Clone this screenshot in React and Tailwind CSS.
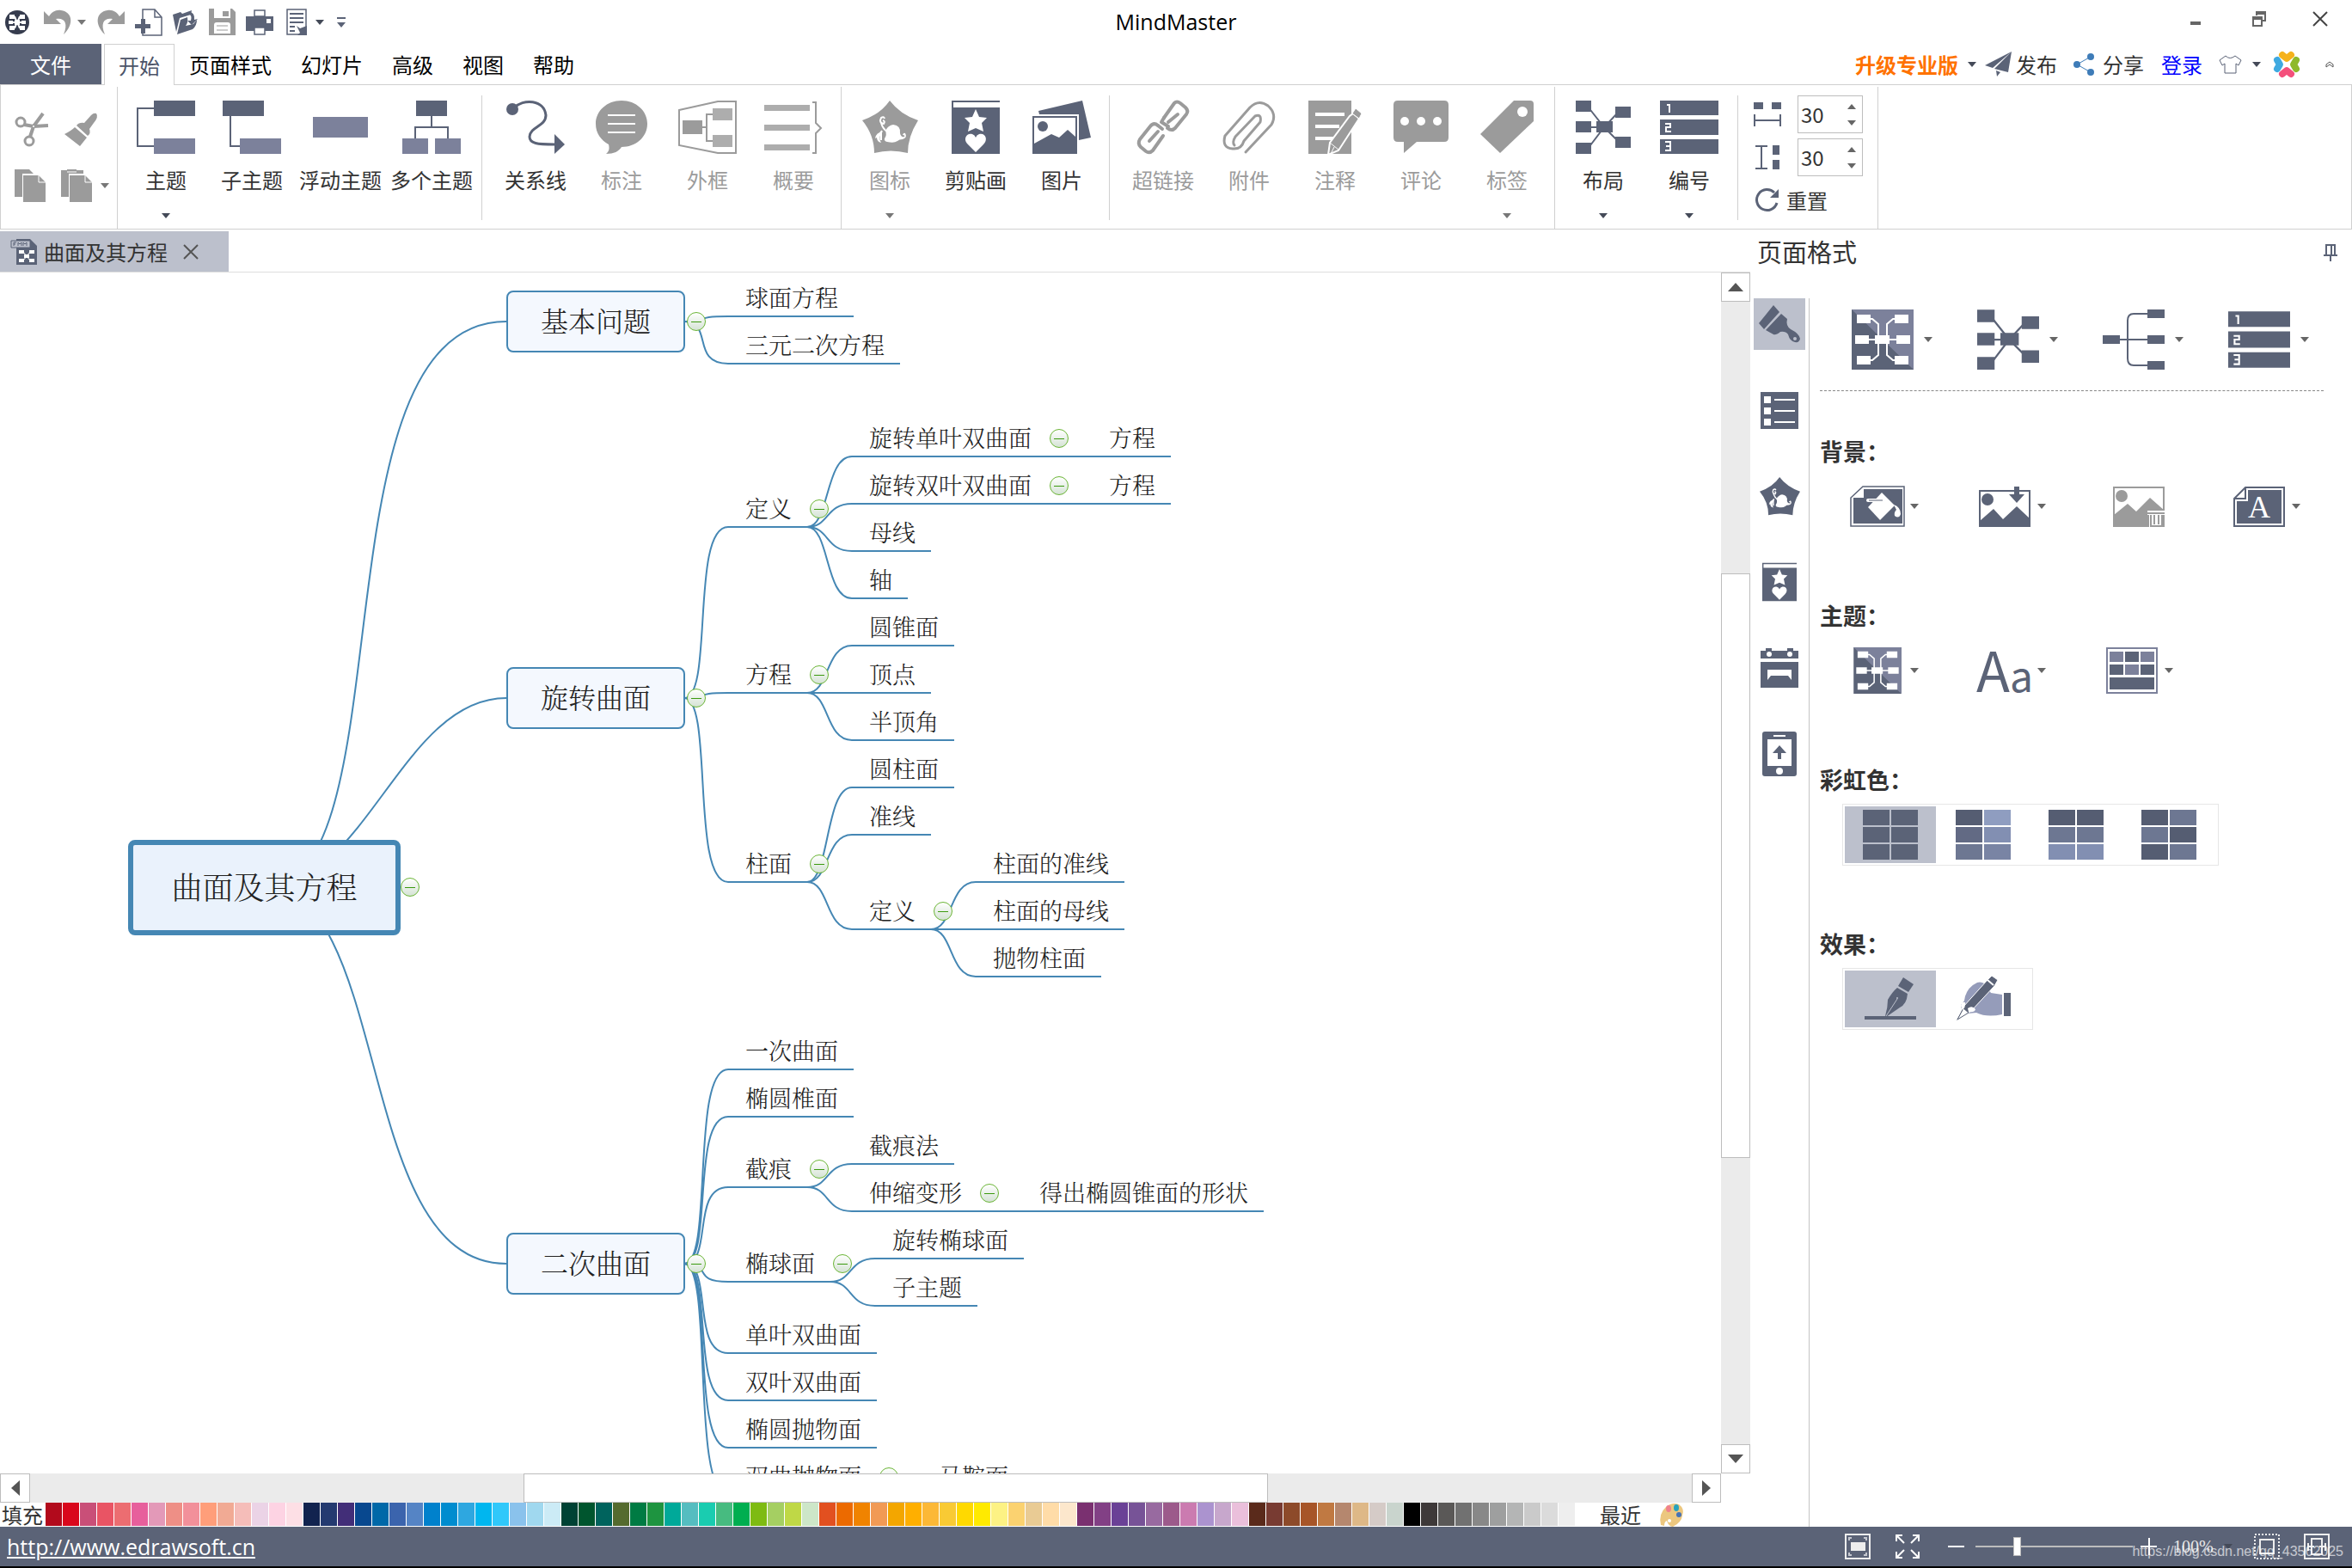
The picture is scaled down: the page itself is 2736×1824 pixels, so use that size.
import React, { useState } from 'react';

const DARK = '#5b6377';
const SOFT = '#7c819b';
const MUTED = '#9b9b9b';
const LINE = '#4587b4';

const Svg = ({ w, h, box, children }) => (
    <svg width={w} height={h} viewBox={box || `0 0 ${w} ${h}`} className="block shrink-0 overflow-visible" aria-hidden="true">
        {children}
    </svg>
);

const Caret = ({ color = '#444a58', up }) => (
    <Svg w={10} h={6}>
        <path d={up ? 'M0 6L5 0L10 6Z' : 'M0 0H10L5 6Z'} fill={color} />
    </Svg>
);

/* ---------- quick access icons ---------- */

const AppLogo = () => (
    <Svg w={28} h={28}>
        <circle cx="14" cy="14" r="14" fill="#363c4e" />
        <path d="M5 5h6v5H5zM17 5h6v5h-6zM4 12h5v4H4zM19 12h5v4h-5zM5 18h6v5H5zM17 18h6v5h-6zM11 11h6v6h-6z" fill="#fff" />
        <path d="M11 7l2 5M17 7l-2 5M9 14h10M11 21l2-5M17 21l-2-5" stroke="#fff" strokeWidth="2" fill="none" />
    </Svg>
);

const Undo = ({ flip }) => (
    <Svg w={32} h={28}>
        <path
            d="M0 1V16H20L14 10C23 8 29 14 23 28C35 17 34 2 20 0C14 -1 9 2 6 7Z"
            fill={MUTED}
            transform={flip ? 'translate(32 0) scale(-1 1)' : undefined}
        />
    </Svg>
);

const NewDoc = () => (
    <Svg w={32} h={32}>
        <path d="M9 12V1H23L31 10V31H9V28" fill="none" stroke={DARK} strokeWidth="1.5" />
        <path d="M23 1V10H31" fill="none" stroke={DARK} strokeWidth="1.5" />
        <path d="M7 12h5v6h6v5h-6v6H7v-6H0v-5h7z" fill={DARK} />
    </Svg>
);

const OpenDoc = () => (
    <Svg w={30} h={28}>
        <path d="M0 5L9 2L11 4L22 0L21 5L8 9L4 25Z" fill={DARK} />
        <path d="M5 28L9 11L17 8Q18 14 15 18L24 16L28 11Q28 18 23 22Z" fill={DARK} />
        <path d="M17 2Q26 1 25 11L29 10L22 17L17 12L21 12Q23 6 17 2Z" fill={DARK} />
    </Svg>
);

const Save = () => (
    <Svg w={31} h={31}>
        <path d="M0 0H27L31 4V31H0Z" fill={MUTED} />
        <path d="M6 0H25V11H6ZM6 19Q6 16 9 16H22Q25 16 25 19V29H6Z" fill="#fff" />
        <path d="M16 3h7v6h-7z" fill={MUTED} />
        <path d="M9 20H22M9 25H22" stroke={MUTED} />
    </Svg>
);

const Print = () => (
    <Svg w={32} h={30}>
        <path d="M0 8H32V25H0Z" fill={DARK} />
        <path d="M10 1H22V8H10ZM10 21H22V29H10Z" fill="#fff" stroke={DARK} strokeWidth="1.5" />
        <path d="M24 11h5v5h-5z" fill="#fff" />
    </Svg>
);

const ListDoc = () => (
    <Svg w={24} h={31}>
        <path d="M1 1H23V30H1Z" fill="#fff" stroke={DARK} strokeWidth="1.5" />
        <path d="M4 6H20M4 11H20M4 16H20M4 21H10M4 26H10" stroke={DARK} strokeWidth="2" />
        <path d="M12 20L16 23L24 20V31H13L16 28Z" fill={DARK} />
    </Svg>
);

/* ---------- ribbon icons ---------- */

const Scissors = () => (
    <Svg w={40} h={40}>
        <g fill="none" stroke={MUTED} strokeWidth="3">
            <circle cx="7" cy="11" r="5" />
            <circle cx="17" cy="33" r="5" />
            <path d="M11 14L22 16L39 15M18 28L22 16L33 1" strokeWidth="4" />
        </g>
        <circle cx="22" cy="16" r="1" fill="#fff" />
    </Svg>
);

const SmallBrush = () => (
    <Svg w={38} h={38}>
        <path d="M37 0Q40 4 34 11L29 18Q31 23 27 26L14 14Q17 10 23 11L31 2Q34 -1 37 0Z" fill={MUTED} />
        <path d="M12 16L26 28L18 38L0 24Q8 20 12 16Z" fill={MUTED} />
    </Svg>
);

const Copy = ({ paste }) => (
    <Svg w={36} h={38}>
        <path d={paste ? 'M0 1H7V0H18V1H26V5H9V32H0Z' : 'M0 0H17L22 5H9V32H0Z'} fill={MUTED} />
        {paste && <path d="M7 3H18" stroke="#fff" />}
        <path d="M10 7H28L36 15V38H10Z" fill={MUTED} />
        <path d="M28 6V15H37" fill="none" stroke="#fff" />
    </Svg>
);

const TopicIcon = () => (
    <Svg w={68} h={62}>
        <path d="M20 9H1V53H20" fill="none" stroke={DARK} strokeWidth="2" />
        <path d="M20 0h48v18H20z" fill={DARK} />
        <path d="M20 44h48v18H20z" fill={SOFT} />
    </Svg>
);

const SubTopicIcon = () => (
    <Svg w={68} h={62}>
        <path d="M9 18V53H20" fill="none" stroke={DARK} strokeWidth="2" />
        <path d="M0 0h48v18H0z" fill={DARK} />
        <path d="M20 44h48v18H20z" fill={SOFT} />
    </Svg>
);

const FloatIcon = () => (
    <Svg w={64} h={62}>
        <path d="M0 19h64v24H0z" fill={SOFT} />
    </Svg>
);

const MultiIcon = () => (
    <Svg w={68} h={62}>
        <path d="M34 18V31M15 44V31H53V44" fill="none" stroke={DARK} strokeWidth="2" />
        <path d="M16 0h36v18H16z" fill={DARK} />
        <path d="M0 44h30v18H0zM38 44h30v18H38z" fill={SOFT} />
    </Svg>
);

const RelationIcon = () => (
    <Svg w={68} h={62}>
        <path d="M8 9C20 -3 44 -1 46 17C46 30 28 30 27 42C27 50 36 51 56 51" fill="none" stroke={DARK} strokeWidth="3" />
        <circle cx="7" cy="10" r="7" fill={DARK} />
        <path d="M56 39L68 51L56 62Z" fill={DARK} />
    </Svg>
);

const CalloutIcon = () => (
    <Svg w={60} h={62}>
        <path d="M30 0C47 0 60 12 60 27C60 43 46 54 30 54C27 59 21 62 12 62C16 59 16 55 15 51C6 46 0 38 0 27C0 12 13 0 30 0Z" fill={MUTED} />
        <path d="M14 17H46M14 27H46M14 37H46" stroke="#fff" strokeWidth="2" />
    </Svg>
);

const BoundaryIcon = () => (
    <Svg w={68} h={62}>
        <path d="M1 11L46 1H67V61H46L1 52Z" fill="none" stroke={MUTED} strokeWidth="2" />
        <path d="M28 31H33M41 16H33V47H41" fill="none" stroke={MUTED} strokeWidth="2" />
        <path d="M5 23h23v16H5z" fill={MUTED} />
        <path d="M40 9h23v14H40zM40 40h23v14H40z" fill="#adadad" />
    </Svg>
);

const SummaryIcon = () => (
    <Svg w={68} h={62}>
        <path d="M0 5h53v7H0zM0 28h53v7H0zM0 51h53v7H0z" fill="#adadad" />
        <path d="M56 2H60V26L66 32L60 38V61H56" fill="none" stroke={MUTED} strokeWidth="2" />
    </Svg>
);

const StickerIcon = ({ w = 65, h = 62, color = MUTED }) => (
    <Svg w={w} h={h} box="0 0 65 62">
        <path d="M32 0Q44 16 65 23Q53 42 53 61Q33 56 14 61Q14 40 0 23Q21 16 32 0Z" fill={color} />
        <path d="M26 44Q29 40 27 35Q30 29 36 28Q45 29 44 38Q45 43 49 42Q50 40 47 40Q48 37 50 38Q53 43 47 45Q43 45 41 47Q37 50 29 48Q25 47 26 44Z" fill="#fff" />
        <path d="M26 21Q25 18 22 20Q19 26 25 27Q27 24 24 23M22 26Q24 33 29 36M23 35L17 43M22 37V46" fill="none" stroke="#fff" strokeWidth="2" />
        <path d="M15 44Q16 37 24 36Q18 42 22 49Q17 48 17 43Z" fill="#fff" />
    </Svg>
);

const ClipartIcon = ({ w = 56, h = 62 }) => (
    <Svg w={w} h={h} box="0 0 56 62">
        <path d="M0 0H56V2H2V8H56V62H0Z" fill={DARK} />
        <path d="M28 10L32 19L41 20L35 26L37 36L28 32L19 36L21 26L15 20L24 19Z" fill="#fff" />
        <path d="M28 60L18 50C13 44 18 37 24 39Q27 40 28 43Q29 40 32 39C39 37 43 45 37 51Z" fill="#fff" />
    </Svg>
);

const PictureIcon = () => (
    <Svg w={68} h={62}>
        <path d="M7 12L58 0L68 43L54 46V16H8Z" fill={DARK} />
        <path d="M0 18H52V62H0Z" fill={DARK} />
        <path d="M2 20H50V42L41 34L31 43L22 39L2 50Z" fill="#fff" />
        <circle cx="12" cy="30" r="6" fill={DARK} />
    </Svg>
);

const LinkIcon = () => (
    <Svg w={60} h={62}>
        <g fill="none" stroke={MUTED} strokeWidth="4" strokeLinecap="round" strokeLinejoin="round">
            <path d="M31 20L43 3Q46 0 50 3L56 8Q60 12 57 16L44 32Q40 36 35 32M36 25L47 16" />
            <path d="M30 41L18 58Q14 62 10 59L4 54Q0 50 3 45L15 30Q19 25 24 29M14 47L24 36" />
            <path d="M24 29L29 33M31 20L28 25L36 30" />
        </g>
    </Svg>
);

const ClipIcon = () => (
    <Svg w={62} h={62}>
        <path
            d="M12 56Q-1 55 3 41L32 8Q42 -2 53 6Q64 16 57 28L27 60M12 56Q22 57 25 47L44 25Q46 15 38 18L15 42Q11 49 14 52"
            fill="none"
            stroke={MUTED}
            strokeWidth="3"
            strokeLinecap="round"
            strokeLinejoin="round"
        />
    </Svg>
);

const NoteIcon = () => (
    <Svg w={62} h={62}>
        <path d="M0 0h50v62H0z" fill={MUTED} />
        <path d="M8 16H42M8 30H36M8 44H29" stroke="#fff" strokeWidth="4" />
        <path d="M52 15L59 21L35 58L23 63L25 49L48 18Z" fill={MUTED} stroke="#fff" strokeWidth="2" />
        <path d="M55 9L62 15L59 21L51 15Z" fill={MUTED} stroke="#fff" />
        <path d="M25 49L35 57M30 54L26 62" stroke="#fff" />
    </Svg>
);

const CommentIcon = () => (
    <Svg w={64} h={62}>
        <path d="M5 0H59Q64 0 64 5V43Q64 48 59 48H27L12 61V48H5Q0 48 0 43V5Q0 0 5 0Z" fill={MUTED} />
        <g fill="#fff">
            <circle cx="13" cy="24" r="5" />
            <circle cx="32" cy="24" r="5" />
            <circle cx="51" cy="24" r="5" />
        </g>
    </Svg>
);

const TagIcon = () => (
    <Svg w={62} h={62}>
        <path d="M39 0H58Q62 0 62 4V24L23 61L0 39Z" fill={MUTED} />
        <circle cx="49" cy="13" r="6" fill="#fff" />
    </Svg>
);

const LayoutIcon = ({ w = 64, h = 62 }) => (
    <Svg w={w} h={h} box="0 0 64 62">
        <path d="M14 7L33 31L50 13M14 56L33 31L50 48M9 31H33" fill="none" stroke={DARK} strokeWidth="2" />
        <path d="M0 0h18v13H0zM0 24h18v13H0zM0 49h18v13H0zM24 24h19v13H24zM46 7h18v13H46zM46 42h18v13H46z" fill={DARK} />
    </Svg>
);

const NumberIcon = ({ w = 68, h = 62 }) => (
    <Svg w={w} h={h} box="0 0 68 62">
        <path d="M0 0h68v17H0zM0 22h68v18H0zM0 45h68v17H0z" fill={DARK} />
        <path d="M8 5H11V14M6 27H12V31H7V36H13M6 48H12V58H6M7 53H12" fill="none" stroke="#fff" strokeWidth="2" />
    </Svg>
);

const HGap = () => (
    <Svg w={32} h={28}>
        <path d="M0 0h11v8H0zM21 0h11v8H21z" fill={DARK} />
        <path d="M1 14V28M31 14V28M1 21H31" stroke={DARK} strokeWidth="2" />
    </Svg>
);

const VGap = () => (
    <Svg w={32} h={28}>
        <path d="M22 0h8v11h-8zM22 17h8v11h-8z" fill={DARK} />
        <path d="M2 1H16M2 27H16M9 1V27" stroke={DARK} strokeWidth="2" />
    </Svg>
);

const ResetIcon = () => (
    <Svg w={30} h={28}>
        <path d="M24 5A12 12 0 1 0 27 17" fill="none" stroke={DARK} strokeWidth="3" />
        <path d="M29 1V11H19Z" fill={DARK} />
    </Svg>
);

/* ---------- side panel icons ---------- */

const BrushIcon = () => (
    <Svg w={48} h={44}>
        <path d="M17 0L24 8L6 28L0 21Q9 10 17 0Z" fill={DARK} />
        <path d="M26 10L33 16Q31 24 37 28Q47 33 48 39Q47 44 42 43Q36 42 34 34Q31 30 25 31Q20 35 17 34L8 29Z" fill={DARK} />
        <circle cx="42" cy="39" r="2" fill="#bcc0cc" />
    </Svg>
);

const OutlineIcon = () => (
    <Svg w={44} h={43}>
        <path d="M0 0h44v43H0z" fill={DARK} />
        <path d="M4 5h8v8H4zM4 18h8v8H4zM4 31h8v8H4z" fill="#fff" />
        <path d="M16 9H40M16 22H40M16 35H40" stroke="#fff" strokeWidth="2" />
    </Svg>
);

const CalendarIcon = () => (
    <Svg w={44} h={46}>
        <path d="M0 3H6V0H13V3H31V0H38V3H44V12H0ZM0 16H44V46H0Z" fill={DARK} />
        <circle cx="10" cy="7" r="3" fill="#fff" />
        <circle cx="34" cy="7" r="3" fill="#fff" />
        <path d="M8 25H36V37L32 32H12L8 37Z" fill="#fff" />
    </Svg>
);

const PhoneIcon = () => (
    <Svg w={40} h={52}>
        <rect width="40" height="52" rx="3" fill={DARK} />
        <path d="M6 9H34V40H6Z" fill="#fff" />
        <path d="M13 5H27" stroke="#fff" strokeWidth="2" />
        <circle cx="20" cy="46" r="4" fill="#fff" />
        <path d="M20 16L28 25H22V32H18V25H12Z" fill={DARK} />
    </Svg>
);

const ThemeIcon = ({ w = 72, h = 70 }) => (
    <Svg w={w} h={h} box="0 0 72 70">
        <path d="M0 0h72v70H0z" fill={DARK} />
        <path d="M0 0H72V70L36 35Z" fill={SOFT} />
        <path d="M20 11H24L31 17V53L24 59H20M52 11H48L41 17V53L48 59H52M14 35H58" fill="none" stroke="#fff" strokeWidth="2" />
        <path d="M6 6h16v10H6zM50 6h16v10H50zM4 30h16v10H4zM27 30h17v10H27zM52 30h16v10H52zM6 54h16v10H6zM50 54h16v10H50z" fill="#fff" />
    </Svg>
);

const StructureIcon = () => (
    <Svg w={72} h={70}>
        <path d="M20 35H52M52 5H36Q29 5 29 13V57Q29 65 36 65H52" fill="none" stroke={DARK} strokeWidth="2" />
        <path d="M0 30h20v10H0zM52 0h20v10H52zM52 30h20v10H52zM52 60h20v10H52z" fill={DARK} />
    </Svg>
);

const FillIcon = () => (
    <Svg w={64} h={48}>
        <path d="M1 14L15 1H63V47H1Z" fill="#fff" stroke={DARK} strokeWidth="1.5" />
        <path d="M4 14H16V4H61V44H4Z" fill={DARK} />
        <path d="M21 25L37 8L52 23L35 40Z" fill="#fff" />
        <path d="M21 17H39" stroke="#fff" strokeWidth="4" strokeLinecap="round" />
        <path d="M22 17H38" stroke={DARK} />
        <path d="M51 22Q59 25 59 33Q57 39 52 35Q51 31 54 28Z" fill="#fff" />
    </Svg>
);

const BgImageIcon = () => (
    <Svg w={60} h={47}>
        <path d="M1 5H59V46H1Z" fill="#fff" stroke={DARK} strokeWidth="2" />
        <circle cx="10" cy="15" r="7" fill={DARK} />
        <path d="M1 46V40L17 26L28 38L44 23L60 38V46Z" fill={DARK} />
        <path d="M41 0h6v9h6L44 19L35 9h6z" fill={DARK} />
    </Svg>
);

const BgDeleteIcon = () => (
    <Svg w={60} h={47}>
        <path d="M1 1H59V46H1Z" fill="#fff" stroke={MUTED} strokeWidth="2" />
        <circle cx="10" cy="11" r="7" fill={MUTED} />
        <path d="M1 46V33L17 20L27 29L43 13L60 28V46Z" fill={MUTED} />
        <path d="M40 28H60V33H58V47H42V33H40Z" fill="#fff" />
        <path d="M40 31H60M46 28V26H54V28M44 33V46H57V33M48 33V44M53 33V44" fill="none" stroke={MUTED} strokeWidth="2" />
    </Svg>
);

const WatermarkIcon = () => (
    <Svg w={60} h={47}>
        <path d="M1 14L14 1H59V46H1Z" fill="#fff" stroke={DARK} strokeWidth="2" />
        <path d="M4 17H17V4H56V43H4Z" fill={DARK} />
        <path d="M1 14H14V1" fill="none" stroke={DARK} strokeWidth="2" />
        <text x="30" y="36" textAnchor="middle" fontSize="36" fill="#fff" className="font-['Liberation_Serif',serif]">A</text>
    </Svg>
);

const ColorGridIcon = () => (
    <Svg w={60} h={54}>
        <path d="M1 1H59V53H1Z" fill="#fff" stroke={SOFT} strokeWidth="2" />
        <path d="M22 5h16v12H22zM4 20h16v12H4zM40 20h16v12H40zM4 35h52v14H4z" fill={DARK} />
        <path d="M4 5h16v12H4zM40 5h16v12H40zM22 20h16v12H22z" fill={SOFT} />
    </Svg>
);

const Swatches = ({ colors }) => (
    <span className="grid h-[58px] w-16 grid-cols-2 gap-[2px]">
        {colors.map((c, i) => (
            <span key={i} style={{ backgroundColor: c }} />
        ))}
    </span>
);

const PenIcon = () => (
    <Svg w={60} h={50}>
        <path d="M0 47H60" stroke={DARK} strokeWidth="4" />
        <path d="M45 0L57 8L51 17L39 10Z" fill={DARK} />
        <path d="M38 12L50 19Q49 31 41 35L25 46L24 45Q27 35 27 26Q32 17 38 12Z" fill={DARK} />
        <path d="M25 45L38 25" stroke="#bcc0cc" />
        <circle cx="38" cy="24" r="1" fill="#bcc0cc" />
    </Svg>
);

const HandPenIcon = () => (
    <Svg w={64} h={54}>
        <path d="M10 29Q12 14 25 8Q33 6 37 14L41 20L54 22V45Q36 49 24 43L14 44Q6 42 6 34Z" fill="#959cba" />
        <path d="M56 20h8v27h-8z" fill={DARK} />
        <path d="M42 0L49 5L45 12L18 41L0 53L9 36L36 6Z" fill={DARK} stroke="#fff" />
        <path d="M2 51L9 38L15 43Z" fill="#fff" stroke={DARK} />
        <path d="M37 5L44 11" stroke="#fff" strokeWidth="2" />
        <path d="M6 35Q7 30 11 31Q12 36 8 40ZM14 38Q19 34 23 39Q22 43 15 42Z" fill="#fff" />
    </Svg>
);

/* ---------- ribbon ---------- */

const RibbonItem = ({ icon, label, disabled, menu, wide }) => (
    <button type="button" disabled={disabled} className={`flex flex-col items-center pt-[18px] ${wide ? 'w-[106px]' : 'w-[100px]'} ${disabled ? 'text-[#9b9b9b]' : 'text-[#333]'}`}>
        <span className="flex h-[62px] items-center">{icon}</span>
        <span className="mt-[14px] text-[24px] leading-8 whitespace-nowrap">{label}</span>
        {menu && <span className="mt-[23px]"><Caret color={disabled ? '#777' : undefined} /></span>}
    </button>
);

const Divider = () => <span className="my-[10px] w-px bg-[#d0d0d0]" />;

const Spinner = ({ id, label, icon }) => {
    const [value, setValue] = useState(30);

    return (
        <div className="flex items-center gap-[19px]">
            <label htmlFor={id} aria-label={label}>{icon}</label>
            <div className="flex h-11 w-[76px] border border-[#bdbdbd]">
                <input
                    id={id}
                    type="text"
                    value={value}
                    onChange={(e) => setValue(Number(e.target.value) || 0)}
                    className="w-[50px] pl-[3px] text-[24px] text-[#333] outline-none"
                />
                <span className="flex flex-1 flex-col items-center justify-around py-[2px]">
                    <button type="button" aria-label="增加" onClick={() => setValue(value + 1)}><Caret up color="#666" /></button>
                    <button type="button" aria-label="减少" onClick={() => setValue(value - 1)}><Caret color="#666" /></button>
                </span>
            </div>
        </div>
    );
};

const Ribbon = () => (
    <div className="flex h-[169px] shrink-0 border border-[#d0d0d0] pt-[2px]">
        <div className="grid w-[136px] grid-cols-[54px_48px] content-start gap-y-[26px] border-r border-[#d0d0d0] pt-[30px] pl-4">
            <button type="button" aria-label="剪切"><Scissors /></button>
            <button type="button" aria-label="格式刷" className="pl-1"><SmallBrush /></button>
            <button type="button" aria-label="复制"><Copy /></button>
            <button type="button" aria-label="粘贴" className="flex items-center gap-[10px]"><Copy paste /><Caret color="#777" /></button>
        </div>
        <div className="-mt-[2px] flex pr-[5px] pl-[6px]">
            <RibbonItem icon={<TopicIcon />} label="主题" menu />
            <RibbonItem icon={<SubTopicIcon />} label="子主题" />
            <RibbonItem icon={<FloatIcon />} label="浮动主题" wide />
            <RibbonItem icon={<MultiIcon />} label="多个主题" wide />
        </div>
        <Divider />
        <div className="-mt-[2px] flex pr-[5px] pl-3">
            <RibbonItem icon={<RelationIcon />} label="关系线" />
            <RibbonItem icon={<CalloutIcon />} label="标注" disabled />
            <RibbonItem icon={<BoundaryIcon />} label="外框" disabled />
            <RibbonItem icon={<SummaryIcon />} label="概要" disabled />
        </div>
        <span className="w-px bg-[#d0d0d0]" />
        <div className="-mt-[2px] flex pr-[5px] pl-[6px]">
            <RibbonItem icon={<StickerIcon />} label="图标" disabled menu />
            <RibbonItem icon={<ClipartIcon />} label="剪贴画" />
            <RibbonItem icon={<PictureIcon />} label="图片" />
        </div>
        <Divider />
        <div className="-mt-[2px] flex pr-[5px] pl-3">
            <RibbonItem icon={<LinkIcon />} label="超链接" disabled />
            <RibbonItem icon={<ClipIcon />} label="附件" disabled />
            <RibbonItem icon={<NoteIcon />} label="注释" disabled />
            <RibbonItem icon={<CommentIcon />} label="评论" disabled />
            <RibbonItem icon={<TagIcon />} label="标签" disabled menu />
        </div>
        <span className="w-px bg-[#d0d0d0]" />
        <div className="-mt-[2px] flex pr-[6px] pl-[6px]">
            <RibbonItem icon={<LayoutIcon />} label="布局" menu />
            <RibbonItem icon={<NumberIcon />} label="编号" menu />
        </div>
        <Divider />
        <div className="flex w-[163px] flex-col gap-[6px] border-r border-[#d0d0d0] pt-[10px] pl-[18px]">
            <Spinner id="h-gap" label="水平间距" icon={<HGap />} />
            <Spinner id="v-gap" label="垂直间距" icon={<VGap />} />
            <button type="button" className="flex h-11 items-center gap-2 text-[24px] leading-8 text-[#333]">
                <ResetIcon />重置
            </button>
        </div>
    </div>
);

/* ---------- mind map ---------- */

const CHAR = 27;
const STEP = 90;
const ROOT = { x: 149, y: 660, w: 317, h: 111 };

// bend: how far the link from the root swings out before it turns
const branches = [
    {
        text: '基本问题',
        y: 57,
        bend: [0.6, 0.19],
        kids: [
            { text: '球面方程', y: 51 },
            { text: '三元二次方程', y: 106 },
        ],
    },
    {
        text: '旋转曲面',
        y: 495,
        bend: [0.42, 0.57],
        kids: [
            {
                text: '定义',
                y: 296,
                kids: [
                    { text: '旋转单叶双曲面', y: 214, kids: [{ text: '方程', y: 214 }] },
                    { text: '旋转双叶双曲面', y: 269, kids: [{ text: '方程', y: 269 }] },
                    { text: '母线', y: 324 },
                    { text: '轴', y: 379 },
                ],
            },
            {
                text: '方程',
                y: 489,
                kids: [
                    { text: '圆锥面', y: 434 },
                    { text: '顶点', y: 489 },
                    { text: '半顶角', y: 544 },
                ],
            },
            {
                text: '柱面',
                y: 709,
                kids: [
                    { text: '圆柱面', y: 599 },
                    { text: '准线', y: 654 },
                    {
                        text: '定义',
                        y: 764,
                        kids: [
                            { text: '柱面的准线', y: 709 },
                            { text: '柱面的母线', y: 764 },
                            { text: '抛物柱面', y: 819 },
                        ],
                    },
                ],
            },
        ],
    },
    {
        text: '二次曲面',
        y: 1153,
        bend: [0.53, 0.37],
        kids: [
            { text: '一次曲面', y: 927 },
            { text: '椭圆椎面', y: 982 },
            {
                text: '截痕',
                y: 1064,
                kids: [
                    { text: '截痕法', y: 1037 },
                    { text: '伸缩变形', y: 1092, kids: [{ text: '得出椭圆锥面的形状', y: 1092 }] },
                ],
            },
            {
                text: '椭球面',
                y: 1174,
                kids: [
                    { text: '旋转椭球面', y: 1147 },
                    { text: '子主题', y: 1202 },
                ],
            },
            { text: '单叶双曲面', y: 1257 },
            { text: '双叶双曲面', y: 1312 },
            { text: '椭圆抛物面', y: 1367 },
            { text: '双曲抛物面', y: 1422, kids: [{ text: '马鞍面', y: 1422 }] },
        ],
    },
];

const curve = (x0, y0, x1, y1, a, b) => {
    const d = x1 - x0;
    return `M${x0} ${y0}C${x0 + d * a} ${y0} ${x0 + d * b} ${y1} ${x1} ${y1}`;
};

// walks the tree once and collects what has to be drawn
const buildMap = () => {
    const paths = [];
    const topics = [];
    const toggles = [{ x: 477, y: 715 }];

    const addTopic = (node, x) => {
        const end = x + node.text.length * CHAR;
        topics.push({ text: node.text, x, y: node.y - 38 });
        paths.push(`M${x - 20} ${node.y}H${end + 18}`);
        if (!node.kids) return;
        toggles.push({ x: end + 32, y: node.y - 21 });
        node.kids.forEach((kid) => {
            paths.push(curve(end + 18, node.y, end + STEP - 20, kid.y, 0.5, 0.4));
            addTopic(kid, end + STEP);
        });
    };

    branches.forEach((b) => {
        paths.push(curve(307, 715, 589, b.y, b.bend[0], b.bend[1]));
        toggles.push({ x: 810, y: b.y });
        b.kids.forEach((kid) => {
            paths.push(curve(796, b.y, 847, kid.y, 0.67, 0.14));
            addTopic(kid, 867);
        });
    });

    return { paths, topics, toggles };
};

const { paths, topics, toggles } = buildMap();

const MindMap = () => (
    <div className="relative min-w-0 flex-1 overflow-hidden font-['Noto_Serif_CJK_SC','Noto_Sans_CJK_SC',sans-serif] font-light text-[#222]">
        <svg className="absolute inset-0 h-full w-full" aria-hidden="true">
            <g fill="none" stroke={LINE} strokeWidth="2">
                {paths.map((d, i) => <path key={i} d={d} />)}
            </g>
        </svg>
        <div
            className="absolute flex items-center justify-center rounded-lg border-[6px] border-[#4587b4] bg-[#eaf2fc] pb-1 text-[36px]"
            style={{ left: ROOT.x, top: ROOT.y, width: ROOT.w, height: ROOT.h }}
        >
            曲面及其方程
        </div>
        {branches.map((b) => (
            <div
                key={b.text}
                className="absolute flex h-[72px] w-[208px] items-center justify-center rounded-lg border-2 border-[#4587b4] bg-[#f4f8fe] pb-1 text-[32px]"
                style={{ left: 589, top: b.y - 36 }}
            >
                {b.text}
            </div>
        ))}
        {topics.map((t, i) => (
            <span key={i} className="absolute text-[27px] leading-8 whitespace-nowrap" style={{ left: t.x, top: t.y }}>{t.text}</span>
        ))}
        {toggles.map((t, i) => (
            <button
                key={i}
                type="button"
                aria-label="折叠"
                className="absolute flex size-[22px] items-center justify-center rounded-full border border-[#6bb536] bg-linear-to-b from-white to-[#d5e3d5]"
                style={{ left: t.x - 11, top: t.y - 11 }}
            >
                <span className="h-px w-3 bg-[#3c9a10]" />
            </button>
        ))}
    </div>
);

/* ---------- scroll bars and colour bar ---------- */

const VScroll = () => (
    <div className="flex w-[34px] shrink-0 flex-col bg-[#ebebeb]">
        <button type="button" aria-label="向上" className="flex h-[34px] items-center justify-center border border-[#bdbdbd] bg-white">
            <Svg w={18} h={10}><path d="M0 10L9 0L18 10Z" fill="#555" /></Svg>
        </button>
        <div className="flex-[316]" />
        <div className="flex-[679] border border-[#bdbdbd] bg-white" />
        <div className="flex-[334]" />
        <button type="button" aria-label="向下" className="flex h-[34px] items-center justify-center border border-[#bdbdbd] bg-white">
            <Svg w={18} h={10}><path d="M0 0H18L9 10Z" fill="#555" /></Svg>
        </button>
    </div>
);

const HScroll = () => (
    <div className="mr-[34px] flex h-[34px] shrink-0 bg-[#ebebeb]">
        <button type="button" aria-label="向左" className="flex w-[35px] items-center justify-center border border-[#bdbdbd] bg-white">
            <Svg w={10} h={18}><path d="M10 0V18L0 9Z" fill="#555" /></Svg>
        </button>
        <div className="flex-[575]" />
        <div className="flex-[864] border border-[#bdbdbd] bg-white" />
        <div className="flex-[494]" />
        <button type="button" aria-label="向右" className="flex w-[34px] items-center justify-center border border-[#bdbdbd] bg-white">
            <Svg w={10} h={18}><path d="M0 0V18L10 9Z" fill="#555" /></Svg>
        </button>
    </div>
);

const palette = [
    '#b20a1c', '#d9071c', '#c94f78', '#e95464', '#ec6d71', '#e75f9c', '#e399b8', '#ee8f86', '#f2909a', '#ff9e7a',
    '#f1aa94', '#f5bdb9', '#ebd3e6', '#fdd3e3', '#fddfe5', '#12234f', '#243a70', '#422e78', '#08488f', '#0068a8',
    '#3b64ad', '#5584c5', '#0081cc', '#008ccf', '#2ea7e0', '#00b6ef', '#30c8fa', '#8ac2ec', '#a0d8ef', '#ccebf6',
    '#004234', '#00552e', '#00635d', '#556b2f', '#007b43', '#1e9440', '#00a999', '#55bdc0', '#1accb0', '#47bb80',
    '#00ae50', '#7ebb12', '#a5cf62', '#bfd846', '#cde6c8', '#e25020', '#ec6a00', '#f08300', '#f19a55', '#f3a600',
    '#ffaf00', '#fcb836', '#f9ca34', '#ffd900', '#ffea00', '#fdf284', '#fbd270', '#e9cb94', '#ffdca8', '#fce7cc',
    '#7a3070', '#824085', '#6a4196', '#775397', '#986aa0', '#9c5a8b', '#cb7bb0', '#ab93cf', '#c7a7cc', '#eabfdb',
    '#5a2a1b', '#783b32', '#8d4a2a', '#a75528', '#c07942', '#b5876e', '#deb887', '#d5cbc7', '#c9d4cd', '#000000',
    '#3e3939', '#5a5857', '#717171', '#888888', '#9e9f9f', '#b4b5b5', '#cacaca', '#dbdbdb', '#eeeeee',
];

const ColorBar = () => (
    <div className="flex h-7 shrink-0 items-center text-[24px] leading-7 text-[#333]">
        <span className="w-[53px] pl-[2px]">填充</span>
        <div className="flex h-[27px] gap-px self-start">
            {palette.map((c) => (
                <button key={c} type="button" aria-label={c} className="w-[19px]" style={{ backgroundColor: c }} />
            ))}
        </div>
        <span className="ml-[29px]">最近</span>
        <button type="button" aria-label="调色板" className="ml-[22px]">
            <Svg w={27} h={27}>
                <path d="M1 25Q-2 12 7 4Q14 -2 22 1Q29 6 26 14Q25 22 15 27Q10 27 8 20Q5 21 5 26Z" fill="#ecc77f" />
                <ellipse cx="10" cy="6" rx="3" ry="4" fill="#f0828c" />
                <ellipse cx="19" cy="5" rx="3" ry="4" fill="#27a3bd" />
                <circle cx="22" cy="13" r="3" fill="#4672b4" />
                <circle cx="11" cy="20" r="2" fill="#fff" />
            </Svg>
        </button>
    </div>
);

/* ---------- format panel ---------- */

const sideTabs = [
    { label: '页面格式', icon: <BrushIcon />, active: true },
    { label: '大纲', icon: <OutlineIcon /> },
    { label: '图标', icon: <StickerIcon w={47} h={45} color={DARK} /> },
    { label: '剪贴画', icon: <ClipartIcon w={40} h={48} /> },
    { label: '任务', icon: <CalendarIcon /> },
    { label: '移动端', icon: <PhoneIcon /> },
];

const rainbows = [
    [DARK, DARK, DARK, DARK, DARK, DARK],
    ['#555d72', '#8f9dc0', '#626a84', '#828fb2', '#6d7792', '#7984a4'],
    ['#555d72', '#555d72', '#6d7792', '#6d7792', '#828fb2', '#828fb2'],
    ['#555d72', '#6d7792', '#6d7792', '#555d72', '#555d72', '#6d7792'],
];

const PickButton = ({ icon, label, large, plain }) => (
    <button type="button" aria-label={label} className={`flex items-center ${large ? 'w-[94px]' : 'w-20'} ${plain ? 'justify-center' : 'justify-between'}`}>
        <span className={`flex justify-center ${large ? 'w-[72px]' : 'w-16'}`}>{icon}</span>
        {!plain && <Caret color="#666" />}
    </button>
);

const Section = ({ title, children }) => (
    <section className="h-[191px]">
        <h3 className="text-[27px] leading-10 font-bold text-[#333]">{title}</h3>
        <div className="flex h-[88px] items-center">{children}</div>
    </section>
);

const OptionGroup = ({ items }) => {
    const [selected, setSelected] = useState(0);

    return (
        <div className="ml-[26px] flex h-[72px] border border-[#e6e6e6] p-[2px]">
            {items.map((item, i) => (
                <button
                    key={i}
                    type="button"
                    aria-label={`样式 ${i + 1}`}
                    onClick={() => setSelected(i)}
                    className={`mr-[2px] flex w-[106px] items-center justify-center ${selected === i ? 'bg-[#bcc0cc]' : ''}`}
                >
                    {item}
                </button>
            ))}
        </div>
    );
};

const FormatPanel = () => (
    <aside className="flex w-[696px] shrink-0 flex-col">
        <div className="flex h-20 items-start justify-between pt-[5px] pr-[17px] pl-1">
            <h2 className="text-[29px] leading-10 text-[#333]">页面格式</h2>
            <button type="button" aria-label="固定" className="mt-3">
                <Svg w={16} h={20}>
                    <path d="M3 13V1H13V13M9 1V13M0 13H16M8 13V20" fill="none" stroke={DARK} strokeWidth="2" />
                </Svg>
            </button>
        </div>
        <div className="flex flex-1">
            <nav className="flex w-[65px] flex-col gap-10 border-r border-[#c4c4c4]">
                {sideTabs.map((t) => (
                    <button key={t.label} type="button" aria-label={t.label} className={`flex size-[60px] items-center justify-center ${t.active ? 'bg-[#bcc0cc]' : ''}`}>
                        {t.icon}
                    </button>
                ))}
            </nav>
            <div className="flex-1 pt-[13px] pr-[33px] pl-3">
                <div className="flex gap-[52px] border-b border-dashed border-[#888] pb-6 pl-[37px]">
                    <PickButton large label="主题" icon={<ThemeIcon />} />
                    <PickButton large label="布局" icon={<LayoutIcon w={72} h={70} />} />
                    <PickButton large label="结构" icon={<StructureIcon />} />
                    <PickButton large label="编号" icon={<NumberIcon w={72} h={70} />} />
                </div>
                <div className="pt-[50px]">
                    <Section title="背景：">
                        <div className="flex gap-[68px] pl-[35px]">
                            <PickButton label="背景颜色" icon={<FillIcon />} />
                            <PickButton label="背景图片" icon={<BgImageIcon />} />
                            <PickButton label="删除背景" icon={<BgDeleteIcon />} plain />
                            <PickButton label="水印" icon={<WatermarkIcon />} />
                        </div>
                    </Section>
                    <Section title="主题：">
                        <div className="flex items-center gap-[68px] pl-[35px]">
                            <PickButton label="主题样式" icon={<ThemeIcon w={58} h={54} />} />
                            <PickButton
                                label="主题字体"
                                icon={<span className="flex items-baseline text-[64px] leading-[54px] text-[#5b6377]">A<span className="text-[48px]">a</span></span>}
                            />
                            <PickButton label="主题颜色" icon={<ColorGridIcon />} />
                        </div>
                    </Section>
                    <Section title="彩虹色：">
                        <OptionGroup items={rainbows.map((c, i) => <Swatches key={i} colors={c} />)} />
                    </Section>
                    <Section title="效果：">
                        <OptionGroup items={[<PenIcon key="pen" />, <HandPenIcon key="hand" />]} />
                    </Section>
                </div>
            </div>
        </div>
    </aside>
);

/* ---------- window chrome ---------- */

const TitleBar = () => (
    <header className="flex h-[51px] shrink-0 items-start">
        <div className="flex h-full flex-1 items-center pr-[23px] pl-[6px]">
            <AppLogo />
            <button type="button" aria-label="撤销" className="ml-[17px]"><Undo /></button>
            <span className="ml-[7px]"><Caret color="#777" /></span>
            <button type="button" aria-label="重做" className="ml-[13px]"><Undo flip /></button>
            <button type="button" aria-label="新建" className="ml-3"><NewDoc /></button>
            <button type="button" aria-label="打开" className="ml-3"><OpenDoc /></button>
            <button type="button" aria-label="保存" className="ml-3"><Save /></button>
            <button type="button" aria-label="打印" className="ml-3"><Print /></button>
            <button type="button" aria-label="导出" className="ml-[15px] flex items-center gap-[10px]"><ListDoc /><Caret /></button>
            <button type="button" aria-label="自定义" className="ml-[15px]">
                <Svg w={10} h={12}><path d="M0 0H10V2H0ZM0 6H10L5 12Z" fill={DARK} /></Svg>
            </button>
        </div>
        <h1 className="font-['Open_Sans','Noto_Sans',sans-serif] text-[25px] leading-[50px] text-black">MindMaster</h1>
        <div className="flex flex-1 items-center justify-end pt-[13px] pr-[29px]">
            <button type="button" aria-label="最小化" className="mr-[60px]"><Svg w={12} h={18}><path d="M0 12h12v4H0z" fill="#666" /></Svg></button>
            <button type="button" aria-label="还原" className="mr-[55px]">
                <Svg w={16} h={18}>
                    <path d="M5 5V1H15V11H11M1 7H11V17H1Z" fill="none" stroke="#666" strokeWidth="2" />
                    <path d="M4 0H16V4H4ZM0 6H12V10H0Z" fill="#666" />
                </Svg>
            </button>
            <button type="button" aria-label="关闭"><Svg w={16} h={16}><path d="M0 0L16 16M16 0L0 16" stroke="#444" strokeWidth="2" /></Svg></button>
        </div>
    </header>
);

const menus = ['页面样式', '幻灯片', '高级', '视图', '帮助'];

const MenuBar = () => (
    <nav className="flex h-[47px] shrink-0 text-[24px] leading-[48px] text-black">
        <button type="button" className="w-[118px] bg-[#5b6377] text-white">文件</button>
        <button type="button" className="relative z-10 -mb-px ml-[3px] border border-b-0 border-[#d0d0d0] bg-white px-4 text-[#4c5468]">开始</button>
        {menus.map((m) => (
            <button key={m} type="button" className="px-[17px]">{m}</button>
        ))}
        <div className="ml-auto flex items-center pr-[21px] text-[#333]">
            <button type="button" className="font-bold text-[#ff7200]">升级专业版</button>
            <span className="ml-[11px]"><Caret /></span>
            <button type="button" className="ml-[10px] flex items-center gap-[5px]">
                <Svg w={31} h={30}>
                    <path d="M31 0L0 16L9 19ZM31 0L11 20L27 24ZM13 22L14 29L18 24Z" fill={DARK} />
                </Svg>
                发布
            </button>
            <button type="button" className="ml-[19px] flex items-center gap-[10px]">
                <Svg w={24} h={26}>
                    <path d="M20 4L4 13L20 22" fill="none" stroke="#3e7cb8" />
                    <circle cx="4" cy="13" r="4" fill="#3e7cb8" />
                    <circle cx="20" cy="4" r="4" fill="#3e7cb8" />
                    <circle cx="20" cy="22" r="4" fill="#3e7cb8" />
                </Svg>
                分享
            </button>
            <a href="#login" className="ml-5 text-[#0000ff]">登录</a>
            <button type="button" aria-label="皮肤" className="ml-[19px] flex items-center gap-3">
                <Svg w={27} h={22}>
                    <path d="M8 1Q13 6 19 1L26 6L23 12L20 10V21H7V10L4 12L1 6Z" fill="none" stroke={DARK} strokeLinejoin="round" />
                </Svg>
                <Caret />
            </button>
            <span className="ml-[15px]">
                <Svg w={30} h={30}>
                    <g fill="none" strokeWidth="8" strokeLinecap="round" strokeLinejoin="round">
                        <path d="M10 4L15 8L20 4" stroke="#f5b21c" />
                        <path d="M10 26L15 22L20 26" stroke="#f4507c" />
                        <path d="M4 10L7 15L4 20" stroke="#3fa9e0" />
                        <path d="M26 10L23 15L26 20" stroke="#8fb92b" />
                    </g>
                </Svg>
            </span>
            <button type="button" aria-label="收起功能区" className="ml-[30px]">
                <Svg w={10} h={8}><path d="M1 7V4L5 1L9 4V7L5 4Z" fill="none" stroke="#555" /></Svg>
            </button>
        </div>
    </nav>
);

const DocTabs = () => (
    <div className="flex h-[50px] shrink-0 border-b border-[#dedede] pt-[2px]">
        <div className="flex w-[266px] items-center bg-[#bcc0cc] pl-[13px] text-[24px] leading-8 text-[#333]">
            <Svg w={30} h={30}>
                <path d="M6 0H22L30 8V30H6Z" fill={DARK} />
                <path d="M0 2h22v8H0z" fill="#bcc0cc" stroke={DARK} />
                <path d="M3 8V4H6M3 6H5M8 8V4L10 6L12 4V8M14 8V4L16 6L18 4V8" fill="none" stroke={DARK} />
                <path d="M9 13h6v4H9zM21 13h6v4h-6zM15 18h6v4h-6zM9 23h6v4H9zM21 23h6v4h-6z" fill="#fff" />
                <path d="M14 15L22 25M22 15L14 25" stroke="#fff" />
            </Svg>
            <span className="ml-2">曲面及其方程</span>
            <button type="button" aria-label="关闭标签" className="ml-[19px]">
                <Svg w={16} h={16}><path d="M0 0L16 16M16 0L0 16" stroke="#555" strokeWidth="2" /></Svg>
            </button>
        </div>
    </div>
);

const StatusBar = () => (
    <footer className="relative flex h-12 shrink-0 items-center border-b-2 border-black bg-[#5b6377] pr-[26px] pl-2">
        <a href="http://www.edrawsoft.cn" className="font-['Open_Sans','Noto_Sans',sans-serif] text-[25px] leading-8 text-white underline decoration-2 underline-offset-2">http://www.edrawsoft.cn</a>
        <div className="ml-auto flex items-center">
            <button type="button" aria-label="适应页面" className="mr-[29px]">
                <Svg w={30} h={30}>
                    <path d="M1 1h28v28H1z" fill="none" stroke="#eee" strokeWidth="2" />
                    <path d="M7 10h17v10H7z" fill="#eee" />
                    <path d="M5 8V5H8M22 5H25V8M5 22V25H8M22 25H25V22" fill="none" stroke="#c5c8d0" strokeWidth="2" />
                </Svg>
            </button>
            <button type="button" aria-label="全屏" className="mr-[33px]">
                <Svg w={28} h={28}>
                    <path d="M1 8V1H8M20 1H27V8M1 20V27H8M20 27H27V20M2 2L10 10M26 2L18 10M2 26L10 18M26 26L18 18" fill="none" stroke="#fff" strokeWidth="2" />
                </Svg>
            </button>
            <button type="button" aria-label="缩小" className="mr-[13px]"><Svg w={19} h={20}><path d="M0 10H19" stroke="#fff" strokeWidth="2" /></Svg></button>
            <input
                type="range"
                aria-label="缩放"
                defaultValue={25}
                className="h-[22px] w-[183px] appearance-none bg-transparent [&::-webkit-slider-runnable-track]:h-[2px] [&::-webkit-slider-runnable-track]:bg-[#bdbdbd] [&::-webkit-slider-thumb]:-mt-[10px] [&::-webkit-slider-thumb]:h-[22px] [&::-webkit-slider-thumb]:w-[9px] [&::-webkit-slider-thumb]:appearance-none [&::-webkit-slider-thumb]:border [&::-webkit-slider-thumb]:border-[#bdbdbd] [&::-webkit-slider-thumb]:bg-white"
            />
            <button type="button" aria-label="放大" className="mr-[19px] ml-[9px]"><Svg w={19} h={20}><path d="M0 10H19M10 0V20" stroke="#fff" strokeWidth="2" /></Svg></button>
            <button type="button" className="mr-[25px] flex w-[69px] items-center justify-between font-['Liberation_Serif',serif] text-[20px] text-[#e8e8e8]">
                100%<Caret />
            </button>
            <button type="button" aria-label="适应选择" className="mr-7">
                <Svg w={30} h={30}>
                    <path d="M1 1h28v28H1z" fill="none" stroke="#eee" strokeWidth="2" strokeDasharray="2 2" />
                    <path d="M7 7h16v16H7z" fill="none" stroke="#eee" strokeWidth="2" />
                </Svg>
            </button>
            <button type="button" aria-label="实际大小">
                <Svg w={30} h={30}>
                    <path d="M1 1h28v28H1zM9 6h12v18H9zM5 11V20M25 11V20M5 15H12M18 15H25" fill="none" stroke="#eee" strokeWidth="2" />
                </Svg>
            </button>
        </div>
        <span className="pointer-events-none absolute right-[10px] bottom-[5px] font-['Liberation_Sans',sans-serif] text-[16px] leading-6 text-white/65">https://blog.csdn.net/qq_43562025</span>
    </footer>
);

const App = () => (
    <div className="flex h-screen w-full flex-col overflow-hidden bg-white font-['Noto_Sans_CJK_SC',sans-serif]">
        <TitleBar />
        <MenuBar />
        <Ribbon />
        <div className="flex min-h-0 flex-1">
            <main className="mr-1 flex min-w-0 flex-1 flex-col">
                <DocTabs />
                <div className="flex min-h-0 flex-1">
                    <MindMap />
                    <VScroll />
                </div>
                <HScroll />
                <ColorBar />
            </main>
            <FormatPanel />
        </div>
        <StatusBar />
    </div>
);

export default App;
